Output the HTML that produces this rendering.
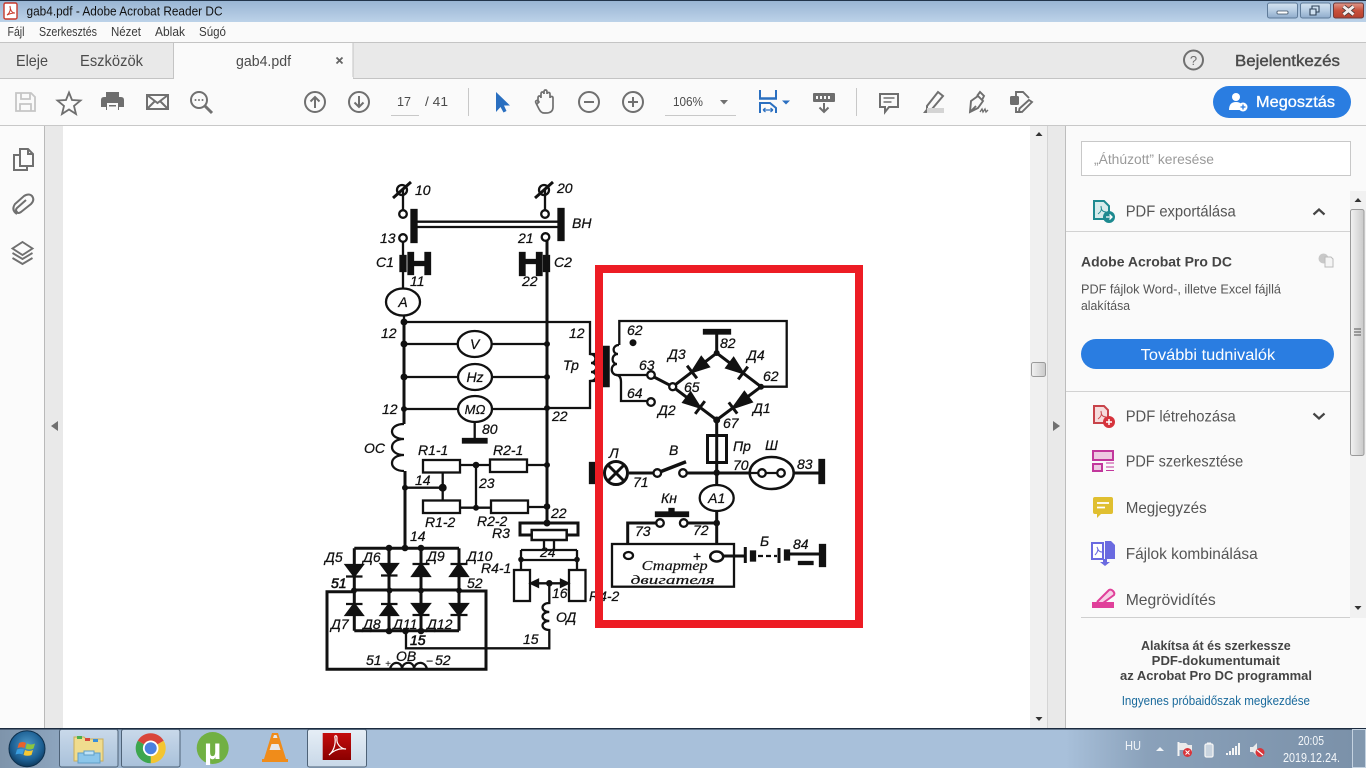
<!DOCTYPE html>
<html lang="hu"><head><meta charset="utf-8"><title>gab4.pdf - Adobe Acrobat Reader DC</title>
<style>
html,body{margin:0;padding:0;width:1366px;height:768px;overflow:hidden;background:#fff}
svg{display:block}
text{font-family:"Liberation Sans","DejaVu Sans",sans-serif}
.s{font-size:14px;font-style:italic;fill:#111;stroke:#111;stroke-width:.25}
.m{font-size:14px;font-style:italic;fill:#111;stroke:#111;stroke-width:.25;text-anchor:middle}
.ui{fill:#4b4b4b}
.w path,.w line,.w circle,.w ellipse,.w rect{fill:none;stroke:#111;stroke-width:2.3}
.w .t{stroke-width:3}
.w .d,.k{fill:#111!important;stroke:#111!important;stroke-width:1}
.o{fill:#fff!important;stroke:#111;stroke-width:2}
.ic{fill:none;stroke:#707070;stroke-width:2}
</style></head><body>
<svg width="1366" height="768" viewBox="0 0 1366 768" xmlns="http://www.w3.org/2000/svg">
<defs>
<linearGradient id="tb" x1="0" y1="0" x2="0" y2="1"><stop offset="0" stop-color="#98b4d2"/><stop offset="1" stop-color="#bcd2e8"/></linearGradient>
<linearGradient id="btn" x1="0" y1="0" x2="0" y2="1"><stop offset="0" stop-color="#d4e2f0"/><stop offset=".5" stop-color="#b6cce2"/><stop offset="1" stop-color="#8faccb"/></linearGradient>
<linearGradient id="cl" x1="0" y1="0" x2="0" y2="1"><stop offset="0" stop-color="#e09a8c"/><stop offset=".5" stop-color="#c9503c"/><stop offset="1" stop-color="#b5402e"/></linearGradient>
<linearGradient id="task" x1="0" y1="0" x2="1" y2="0"><stop offset="0" stop-color="#7e94ab"/><stop offset=".06" stop-color="#93abc5"/><stop offset=".12" stop-color="#a8c0da"/><stop offset=".78" stop-color="#a8c0da"/><stop offset=".84" stop-color="#8aa1ba"/><stop offset="1" stop-color="#7a90a8"/></linearGradient>
<linearGradient id="tbtn" x1="0" y1="0" x2="0" y2="1"><stop offset="0" stop-color="#c9d9ea"/><stop offset="1" stop-color="#a9c1da"/></linearGradient>
<linearGradient id="tbta" x1="0" y1="0" x2="0" y2="1"><stop offset="0" stop-color="#e6eef6"/><stop offset="1" stop-color="#c8d8e8"/></linearGradient>
<linearGradient id="sb" x1="0" y1="0" x2="1" y2="0"><stop offset="0" stop-color="#f2f2f2"/><stop offset="1" stop-color="#c9c9c9"/></linearGradient>
<radialGradient id="orb" cx=".5" cy=".4" r=".6"><stop offset="0" stop-color="#4f9ac9"/><stop offset=".7" stop-color="#1c5f93"/><stop offset="1" stop-color="#0e3a5e"/></radialGradient>
<linearGradient id="ared" x1="0" y1="0" x2="0" y2="1"><stop offset="0" stop-color="#c40d0d"/><stop offset="1" stop-color="#8a0000"/></linearGradient>
</defs>

<!-- title bar -->
<rect width="1366" height="22" fill="url(#tb)"/>
<rect width="1366" height="1" fill="#22344a"/>
<rect x="4" y="3" width="13" height="16" rx="1.5" fill="#fff" stroke="#c8392b" stroke-width="1.4"/>
<path d="M7 15c3-2 4-6 3-9c0 4 2 7 5 7c-3 0-6 1-8 2z" fill="none" stroke="#c8392b" stroke-width="1"/>
<text x="26.5" y="15.5" font-size="13" fill="#111" textLength="196" lengthAdjust="spacingAndGlyphs">gab4.pdf - Adobe Acrobat Reader DC</text>
<rect x="1267.5" y="3" width="30" height="15" rx="2" fill="url(#btn)" stroke="#5f7b99"/>
<rect x="1300.5" y="3" width="30" height="15" rx="2" fill="url(#btn)" stroke="#5f7b99"/>
<rect x="1333.5" y="3" width="30" height="15" rx="2" fill="url(#cl)" stroke="#6e3a3a"/>
<rect x="1277" y="11" width="11" height="3" rx="1" fill="#fff" stroke="#3a4d63" stroke-width=".8"/>
<path d="M1312 9v-3h7v6h-3M1310 9h6v6h-6z" fill="#cfe0f0" stroke="#2f4258" stroke-width="1.1"/>
<path d="M1343.5 6.5l10 8M1353.5 6.5l-10 8" stroke="#4a3b3b" stroke-width="4.6"/>
<path d="M1343.5 6.5l10 8M1353.5 6.5l-10 8" stroke="#f4eeee" stroke-width="2.8"/>

<!-- menu -->
<rect y="22" width="1366" height="20" fill="#fafafa"/>
<rect y="42" width="1366" height="1" fill="#c4c4c4"/>
<g font-size="13" fill="#3a3a3a">
<text x="7.5" y="36" textLength="17" lengthAdjust="spacingAndGlyphs">Fájl</text>
<text x="39" y="36" textLength="58" lengthAdjust="spacingAndGlyphs">Szerkesztés</text>
<text x="111" y="36" textLength="30" lengthAdjust="spacingAndGlyphs">Nézet</text>
<text x="155" y="36" textLength="30" lengthAdjust="spacingAndGlyphs">Ablak</text>
<text x="199" y="36" textLength="27" lengthAdjust="spacingAndGlyphs">Súgó</text>
</g>

<!-- tabs -->
<rect y="43" width="1366" height="35" fill="#e9e9e9"/>
<rect y="78" width="1366" height="1" fill="#c4c4c4"/>
<rect x="173.500" y="42.500" width="179.500" height="36" fill="#fafafa" stroke="#c4c4c4"/>
<rect x="174" y="77" width="179" height="3" fill="#fafafa"/>
<text x="16" y="66" font-size="16" class="ui" textLength="32" lengthAdjust="spacingAndGlyphs">Eleje</text>
<text x="80" y="66" font-size="16" class="ui" textLength="63" lengthAdjust="spacingAndGlyphs">Eszközök</text>
<text x="236" y="66" font-size="15" class="ui" textLength="55" lengthAdjust="spacingAndGlyphs">gab4.pdf</text>
<path d="M336.500 57.500l6 6M342.500 57.500l-6 6" stroke="#666" stroke-width="1.800"/>
<circle cx="1193.500" cy="60" r="9.500" fill="none" stroke="#707070" stroke-width="2"/>
<text x="1193.500" y="65" font-size="13" fill="#707070" text-anchor="middle">?</text>
<text x="1235" y="66" font-size="16" fill="#4a4a4a" stroke="#4a4a4a" stroke-width=".4" textLength="105" lengthAdjust="spacingAndGlyphs">Bejelentkezés</text>

<!-- toolbar -->
<rect y="79" width="1366" height="46" fill="#fafafa"/>
<rect y="125" width="1366" height="1.500" fill="#c8c8c8"/>
<g fill="none" stroke="#c6c6c6" stroke-width="1.800"><path d="M16 93h15l4 4v14H16zM21 93v6h9v-6M20 111v-7h11v7"/></g>
<path d="M69 92.500l3 7.500 8.500.500-6.500 5.500 2 8-7-4.500-7 4.500 2-8-6.500-5.500 8.500-.500z" fill="none" stroke="#6e6e6e" stroke-width="1.800"/>
<path d="M106 92h13v5h-13z" fill="#6e6e6e"/><path d="M101 100q0-3 3-3h17q3 0 3 3v7h-5v3h-13v-3h-5z" fill="#6e6e6e"/><rect x="107" y="103" width="11" height="7" fill="#fafafa"/><rect x="109" y="105" width="7" height="1.500" fill="#6e6e6e"/>
<g class="ic"><rect x="147" y="95" width="21" height="14"/><path d="M147 95l10.500 8 10.500-8M147 109l8-8M168 109l-8-8"/></g>
<g class="ic"><circle cx="199" cy="100" r="8"/><path d="M205 106l7 7" stroke-width="3"/></g>
<g fill="#707070"><circle cx="195.500" cy="100" r="1"/><circle cx="199" cy="100" r="1"/><circle cx="202.500" cy="100" r="1"/></g>
<g class="ic"><circle cx="315" cy="102" r="10"/><path d="M315 108v-11M310.500 101.500l4.500-4.500 4.500 4.500"/></g>
<g class="ic"><circle cx="359" cy="102" r="10"/><path d="M359 96v11M354.500 102.500l4.500 4.500 4.500-4.500"/></g>
<text x="397" y="106" font-size="12.500" class="ui" textLength="14" lengthAdjust="spacingAndGlyphs">17</text>
<text x="425" y="106" font-size="12.500" class="ui" textLength="23" lengthAdjust="spacingAndGlyphs">/ 41</text>
<rect x="391" y="115" width="28" height="1" fill="#c8c8c8"/>
<rect x="468" y="88" width="1" height="28" fill="#c8c8c8"/>
<path d="M496 92v20l4.500-5 3 5.500 3-1.500-2.500-5.500h6z" fill="#2a6fc0"/>
<path d="M538 103v-5q0-2 1.500-2t1.500 2v-4q0-2 1.500-2t1.500 2v-2q0-2 1.500-2t1.500 2v2q0-1.500 1.500-1.500t1.500 1.500v4q0-1.500 1.500-1.500t1.500 1.500v9q0 6-7 6h-2q-3 0-5-4l-3-6q-1-2 .5-2.500 1.500-.500 2.500 1.500z" fill="none" stroke="#707070" stroke-width="1.700"/>
<g class="ic"><circle cx="589" cy="102" r="10"/><path d="M584 102h10"/><circle cx="633" cy="102" r="10"/><path d="M628 102h10M633 97v10"/></g>
<text x="673" y="106" font-size="12.500" class="ui" textLength="30" lengthAdjust="spacingAndGlyphs">106%</text>
<path d="M720 100h8l-4 4.500z" fill="#707070"/>
<rect x="665" y="115" width="71" height="1" fill="#c8c8c8"/>
<g fill="none" stroke="#2a6fc0" stroke-width="2"><path d="M760 90v8M776 90v8"/><path d="M759 98.500h18" stroke-width="2.500"/><path d="M760 113v-10h10l6 5v5" /><path d="M763 110h10M763 110l2.500-2M763 110l2.500 2M773 110l-2.500-2M773 110l-2.500 2" stroke-width="1.200"/></g>
<path d="M782 100.500h8l-4 4z" fill="#2a6fc0"/>
<rect x="813" y="93" width="22" height="9" rx="1" fill="#6e6e6e"/><g fill="#fafafa"><rect x="816" y="96" width="2" height="3"/><rect x="820" y="96" width="2" height="3"/><rect x="824" y="96" width="2" height="3"/><rect x="828" y="96" width="2" height="3"/></g>
<path d="M824 103v9M819.500 107.500l4.500 4.500 4.500-4.500" fill="none" stroke="#6e6e6e" stroke-width="2"/>
<rect x="856" y="88" width="1" height="28" fill="#c8c8c8"/>
<path d="M880 94h18v13h-9l-4 5v-5h-5z" fill="none" stroke="#6e6e6e" stroke-width="2"/><path d="M883.500 98h11M883.500 102h8" stroke="#6e6e6e" stroke-width="1.500"/>
<path d="M927 106l11-14 5 4-11 13h-5z" fill="none" stroke="#707070" stroke-width="2"/><path d="M923 113l4-5 3 2-1 3z" fill="#707070"/><rect x="927" y="108" width="17" height="5" fill="#d4d4d4"/>
<path d="M970 112l1-11 7-5 5 5-5 7-8 4zM970 112l6-6M977 96l3-4 4 4-2 4" fill="none" stroke="#6e6e6e" stroke-width="1.900"/><path d="M980 112l2-3 1 3 2-3 1 3 2-2" fill="none" stroke="#6e6e6e" stroke-width="1.300"/>
<rect x="1010" y="96" width="9" height="9" rx="1.500" fill="#6e6e6e"/><path d="M1016 96v-4h7l6 6M1021 112h-5v-5M1029 100l3 2-10 10-3-.500.500-3z" fill="none" stroke="#6e6e6e" stroke-width="1.900"/>
<rect x="1213" y="86" width="138" height="32" rx="16" fill="#2a7de1"/>
<circle cx="1236" cy="97" r="4" fill="#fff"/><path d="M1229 110q0-8 7-8t7 8z" fill="#fff"/><circle cx="1243" cy="107" r="4.500" fill="#fff"/><path d="M1243 104.500v5M1240.500 107h5" stroke="#2a7de1" stroke-width="1.300"/>
<text x="1256" y="107" font-size="16" fill="#fff" stroke="#fff" stroke-width=".3" textLength="79" lengthAdjust="spacingAndGlyphs">Megosztás</text>

<!-- side panels -->
<rect y="126" width="44" height="602" fill="#fbfbfb"/>
<rect x="44" y="126" width="1" height="602" fill="#b9b9b9"/>
<rect x="45" y="126" width="18" height="602" fill="#e9e9e9"/>
<rect x="1030" y="126" width="17" height="602" fill="#f0f0f0"/>
<rect x="1047" y="126" width="1" height="602" fill="#d4d4d4"/>
<rect x="1048" y="126" width="17" height="602" fill="#e9e9e9"/>
<rect x="1065" y="126" width="1" height="602" fill="#bdbdbd"/>
<rect x="1066" y="126" width="300" height="602" fill="#fafafa"/>
<g fill="none" stroke="#707070" stroke-width="2"><path d="M20 155h-6v15h13v-4"/><path d="M20 149h8l5 5v12H20zM28 149v5h5"/></g>
<path d="M17 214q-6-4-2-10l9-8q5-3 8 0 3 4-1 8l-10 8q-3 2-4 0-2-2 0-4l9-8" fill="none" stroke="#707070" stroke-width="2"/>
<g fill="none" stroke="#707070" stroke-width="1.900"><path d="M22.500 242l10 6.500-10 6.500-10-6.500z"/><path d="M12.500 253l10 6 10-6M12.500 258l10 6 10-6"/></g>
<path d="M58 421v10l-7-5z" fill="#707070"/>
<path d="M1053 421v10l7-5z" fill="#707070"/>
<path d="M1035.500 136l3.500-4 3.500 4z" fill="#333"/>
<path d="M1035.500 717l3.500 4 3.500-4z" fill="#333"/>
<rect x="1031.500" y="362.500" width="14" height="14" rx="2" fill="url(#sb)" stroke="#9a9a9a"/>

<!-- right pane -->
<rect x="1081.500" y="141.500" width="269" height="34" fill="#fff" stroke="#c8c8c8"/>
<text x="1094" y="164" font-size="14" fill="#9a9a9a" textLength="120" lengthAdjust="spacingAndGlyphs">„Áthúzott” keresése</text>
<rect x="1066" y="231" width="284" height="1" fill="#d2d2d2"/>
<rect x="1066" y="391" width="284" height="1" fill="#d2d2d2"/>
<path d="M1094 201h10l5 5v13h-15z" fill="#d7ecec" stroke="#1d8a90" stroke-width="2"/><circle cx="1109" cy="217" r="6" fill="#1d8a90"/><path d="M1106 217h6M1109.500 214.500l2.500 2.500-2.500 2.500" stroke="#fff" fill="none" stroke-width="1.300"/>
<path d="M1098 214c3-2 4-5 3-8c0 3 1 6 5 6" fill="none" stroke="#1d8a90" stroke-width=".9"/>
<g font-size="16" fill="#555">
<text x="1125.700" y="216.700" textLength="110" lengthAdjust="spacingAndGlyphs">PDF exportálása</text>
<text x="1125.700" y="421.700" textLength="110" lengthAdjust="spacingAndGlyphs">PDF létrehozása</text>
<text x="1125.700" y="466.700" textLength="117.500" lengthAdjust="spacingAndGlyphs">PDF szerkesztése</text>
<text x="1125.700" y="513" textLength="81" lengthAdjust="spacingAndGlyphs">Megjegyzés</text>
<text x="1125.700" y="559" textLength="132" lengthAdjust="spacingAndGlyphs">Fájlok kombinálása</text>
<text x="1125.700" y="605" textLength="90" lengthAdjust="spacingAndGlyphs">Megrövidítés</text>
</g>
<path d="M1313.500 214.500l5.500-5 5.500 5" fill="none" stroke="#444" stroke-width="2.200"/>
<path d="M1313.500 413.500l5.500 5 5.500-5" fill="none" stroke="#444" stroke-width="2.200"/>
<text x="1081" y="266.700" font-size="13.500" font-weight="bold" fill="#444" textLength="151" lengthAdjust="spacingAndGlyphs">Adobe Acrobat Pro DC</text>
<circle cx="1323.500" cy="258.500" r="5" fill="#c8c8c8"/><path d="M1325 257h6l2 2v8h-8z" fill="#f4f4f4" stroke="#bbb"/>
<text x="1081" y="293.300" font-size="12.500" fill="#555" textLength="200" lengthAdjust="spacingAndGlyphs">PDF fájlok Word-, illetve Excel fájllá</text>
<text x="1081" y="310" font-size="12.500" fill="#555" textLength="49" lengthAdjust="spacingAndGlyphs">alakítása</text>
<rect x="1081" y="339" width="253" height="30" rx="15" fill="#2a7de1"/>
<text x="1140.700" y="360" font-size="16" fill="#fff" textLength="134.500" lengthAdjust="spacingAndGlyphs">További tudnivalók</text>
<path d="M1094 406h10l4 4v13h-14z" fill="#f6dcdc" stroke="#c8434a" stroke-width="2"/><circle cx="1109" cy="422" r="6" fill="#d6333c"/><path d="M1106 422h6M1109 419v6" stroke="#fff" stroke-width="1.500"/>
<path d="M1098 419c3-2 4-5 3-8c0 3 1 6 5 6" fill="none" stroke="#c8434a" stroke-width=".9"/>
<rect x="1093" y="451" width="20" height="9" fill="#eec9e2" stroke="#c2379c" stroke-width="2"/><rect x="1093" y="464" width="9" height="7" fill="#eec9e2" stroke="#c2379c" stroke-width="2"/><path d="M1106 463h8M1106 467h8M1106 470.500h8" stroke="#c2379c"/>
<path d="M1095 497h16q2 0 2 2v13q0 2-2 2h-10l-4 4v-4h-2q-2 0-2-2v-13q0-2 2-2z" fill="#e0bf30"/><path d="M1097 503h12M1097 507.500h8" stroke="#fff" stroke-width="1.800"/>
<path d="M1092 543h11v16h-11z" fill="#fff" stroke="#6a6ae0" stroke-width="2"/><path d="M1105 541h6l4 4v14h-10z" fill="#6a6ae0"/><path d="M1103 559v3h-3l5 4 5-4h-3v-3z" fill="#6a6ae0"/><path d="M1095 555c2-2 4-5 2-8c1 3 2 5 5 5" fill="none" stroke="#6a6ae0"/>
<path d="M1097 602l12-12q2-1 4 1t1 4l-11 8" fill="#f6d0e6" stroke="#e0409a" stroke-width="2"/><rect x="1092" y="602" width="22" height="6" fill="#e0409a"/>
<rect x="1081" y="617" width="269" height="1" fill="#cfcfcf"/>
<rect x="1350" y="191" width="16" height="427" fill="#f1f1f1"/>
<path d="M1354.500 202l3.500-4 3.500 4z" fill="#333"/>
<path d="M1354.500 606l3.500 4 3.500-4z" fill="#333"/>
<rect x="1350.500" y="209.500" width="13.500" height="246" rx="2" fill="url(#sb)" stroke="#9a9a9a"/>
<path d="M1354 329h7M1354 332h7M1354 335h7" stroke="#555"/>
<g font-size="12.500" font-weight="bold" fill="#444">
<text x="1141" y="650" textLength="149.700" lengthAdjust="spacingAndGlyphs">Alakítsa át és szerkessze</text>
<text x="1151.700" y="665" textLength="128.300" lengthAdjust="spacingAndGlyphs">PDF-dokumentumait</text>
<text x="1120" y="680" textLength="192" lengthAdjust="spacingAndGlyphs">az Acrobat Pro DC programmal</text>
</g>
<text x="1121.700" y="705" font-size="12.500" fill="#1a6a9c" textLength="188.300" lengthAdjust="spacingAndGlyphs">Ingyenes próbaidőszak megkezdése</text>

<!-- PDF page -->
<rect x="63" y="126" width="967" height="602" fill="#fff"/>

<g class="w">
<!-- top terminals -->
<path d="M403 190V211M545 190V211M414 221.700H560M414 227H560"/>
<circle class="o" cx="403" cy="214" r="3.800"/><circle class="o" cx="545" cy="214" r="3.800"/>
<circle cx="402" cy="190" r="5"/><path style="stroke-width:3" d="M393 198L411 182"/><circle cx="544" cy="190" r="5"/><path style="stroke-width:3" d="M535 198L553 182"/>
<rect class="k" x="411.500" y="210" width="5" height="32"/><rect class="k" x="558.500" y="209" width="5" height="31"/>
<!-- left / right rails -->
<path class="t" d="M404 322V424M405 471V548M547 240V523"/>
<path d="M403 241V290"/>
<circle class="o" cx="403" cy="238" r="3.800"/><circle class="o" cx="545.500" cy="237" r="3.800"/>
<rect class="k" x="400.500" y="256" width="5" height="15"/><rect class="k" x="544" y="256" width="5" height="15"/>
<rect class="k" x="408.500" y="253" width="4.500" height="21"/><rect class="k" x="425.500" y="253" width="4.500" height="21"/><rect class="k" x="412" y="262" width="14" height="3"/>
<rect class="k" x="520" y="253" width="4.500" height="22"/><rect class="k" x="537" y="253" width="4.500" height="22"/><rect class="k" x="524" y="260" width="14" height="3"/>
<!-- meters -->
<path d="M404 315V322"/>
<ellipse class="o" cx="403" cy="302" rx="17" ry="13.500"/>
<path d="M404 322H590V354H596M404 344H547M404 377H547M404 409H547M547 408H590V381H596"/>
<path d="M590 354c7 0 7 9 1 9c7 0 7 9 0 9c7 0 7 9-1 9"/>
<ellipse class="o" cx="474.700" cy="344" rx="17" ry="13"/><ellipse class="o" cx="475" cy="377" rx="17" ry="13"/><ellipse class="o" cx="475" cy="409" rx="17" ry="13"/>
<path d="M474.700 422V440"/><rect class="k" x="463" y="439" width="23.500" height="3.500"/>
<circle class="d" cx="404" cy="322" r="3"/><circle class="d" cx="404" cy="344" r="3"/><circle class="d" cx="404" cy="377" r="3"/><circle class="d" cx="404" cy="409" r="2.500"/>
<circle class="d" cx="547" cy="344" r="2.500"/><circle class="d" cx="547" cy="377" r="2.500"/><circle class="d" cx="547" cy="408" r="2.500"/>
<rect class="k" x="603.500" y="347" width="5" height="39"/>
<!-- OC coil -->
<path d="M404 424c-16 0-16 15 0 15c-16 0-16 16 0 16c-16 0-16 16 0 16"/>
<!-- R block -->
<path d="M405 487.700H442.700M442.700 472V500M460 465H490M527 465H547M476 465V507.700M460 507.700H490M528 507H547"/>
<rect class="o" x="423" y="460" width="37" height="12.500"/><rect class="o" x="490" y="459.500" width="37" height="12.500"/>
<rect class="o" x="423" y="500.500" width="37" height="12.500"/><rect class="o" x="491" y="500.500" width="37" height="12.500"/>
<circle class="d" cx="405" cy="487.700" r="2.500"/><circle class="d" cx="442.700" cy="487.700" r="3.500"/><circle class="d" cx="476" cy="465" r="2.800"/><circle class="d" cx="476" cy="507.700" r="2.500"/><circle class="d" cx="547" cy="465" r="2.500"/><circle class="d" cx="547" cy="506.500" r="2.800"/><circle class="d" cx="547" cy="523" r="3"/>
<!-- R3 -->
<path class="t" d="M531.700 535H520V523H578V535H566.700"/>
<rect class="o" x="531.700" y="530" width="35" height="10" style="stroke-width:2.500"/>
<path d="M544 540V550M554 540V550M521 550H577M521 550V570M577 550V570M521 560H577"/>
<rect class="o" x="514" y="570" width="16" height="31"/><rect class="o" x="569" y="570" width="16.500" height="31"/>
<circle class="d" cx="521" cy="559.500" r="2.300"/><circle class="d" cx="577" cy="559.500" r="2.300"/>
<path d="M530 583.300H569"/><path class="k" d="M531 583.300l7-3.300v6.600zM568 583.300l-7-3.300v6.600z"/><circle class="d" cx="549.300" cy="583.300" r="2.800"/>
<path d="M549.300 583V603c-9 0-9 9 0 9c-9 0-9 9 0 9c-9 0-9 9 0 9V648.300H406V630"/>
<!-- diode bridge -->
<path class="t" d="M354.300 548.300H459M354.300 630.700H459M354.300 548.300V630.700M389 548.300V630.700M421 548.300V630.700M459 548.300V630.700M352 590H459"/>
<path class="t" d="M354 591.700H327V669.300H486V591H459"/>
<path d="M390 669c2-8 11-8 12-1c2-7 11-7 12 0c2-7 11-7 13 1"/>
<path class="k" d="M346 565h16.500l-8.300 11zM381 564h16.500l-8.300 11zM412.500 576h17l-8.500-12zM450.500 576h17l-8.500-12zM346 615h16.500l-8.300-11zM381 615h16.500l-8.300-11zM412.500 604h17l-8.500 11zM450.500 604h17l-8.500 11z"/>
<path d="M346 576.500H362.500M381 575.500H397.500M412.500 564H429.500M450.500 564H467.500M346 604H362.500M381 604H397.500M412.500 615H429.500M450.500 615H467.500"/>
<circle class="d" cx="354" cy="590.500" r="2.500"/><circle class="d" cx="389.500" cy="590.500" r="2.500"/><circle class="d" cx="421" cy="590.500" r="2.500"/><circle class="d" cx="459" cy="590.500" r="2.500"/>
<circle class="d" cx="389" cy="548" r="2.800"/><circle class="d" cx="405" cy="548" r="2.800"/><circle class="d" cx="421" cy="548" r="2.800"/>
<circle class="d" cx="389" cy="631" r="2.800"/><circle class="d" cx="405.500" cy="631" r="2.800"/><circle class="d" cx="421" cy="631" r="2.800"/>
<!-- Л bar left of the red frame -->
<rect class="k" x="590" y="463" width="4" height="20"/>
</g>

<g>
<text class="s" x="415" y="195">10</text><text class="s" x="557" y="193">20</text>
<text class="s" x="572" y="228">ВН</text><text class="s" x="380" y="243">13</text><text class="s" x="518" y="243">21</text>
<text class="s" x="376" y="267">C1</text><text class="s" x="554" y="267">C2</text><text class="s" x="410" y="286">11</text><text class="s" x="522" y="286">22</text>
<text class="m" x="403" y="307">A</text><text class="m" x="474.700" y="349">V</text><text class="m" x="475" y="382" font-size="13">Hz</text><text class="m" x="475" y="414" style="font-size:13px">MΩ</text>
<text class="s" x="381" y="338">12</text><text class="s" x="569" y="338">12</text><text class="s" x="563" y="370">Тр</text><text class="s" x="382" y="414">12</text><text class="s" x="552" y="421">22</text><text class="s" x="482" y="434">80</text>
<text class="s" x="364" y="453">ОС</text><text class="s" x="418" y="455">R1-1</text><text class="s" x="493" y="455">R2-1</text><text class="s" x="415" y="485">14</text><text class="s" x="479" y="488">23</text>
<text class="s" x="425" y="527">R1-2</text><text class="s" x="477" y="526">R2-2</text><text class="s" x="551" y="518">22</text><text class="s" x="492" y="538">R3</text><text class="s" x="410" y="541">14</text><text class="s" x="540" y="557">24</text>
<text class="s" x="481" y="573">R4-1</text><text class="s" x="589" y="601">R4-2</text><text class="s" x="552" y="598">16</text><text class="s" x="556" y="622">ОД</text><text class="s" x="523" y="644">15</text>
<text class="s" x="325" y="562">Д5</text><text class="s" x="363" y="562">Д6</text><text class="s" x="427" y="561">Д9</text><text class="s" x="467" y="561">Д10</text>
<text class="s" x="331" y="588" style="stroke-width:.6">51</text><text class="s" x="467" y="588">52</text>
<text class="s" x="331" y="629">Д7</text><text class="s" x="363" y="629">Д8</text><text class="s" x="393" y="629">Д11</text><text class="s" x="427" y="629">Д12</text>
<text class="s" x="410" y="645" style="stroke-width:.6">15</text><text class="s" x="366" y="665">51</text><text class="s" x="385" y="667" style="font-size:10px;stroke-width:0">+</text><text class="s" x="396" y="661">ОВ</text><text class="s" x="426" y="665" style="font-size:12px">−</text><text class="s" x="435" y="665">52</text>
</g>

<!-- right circuit -->
<g class="w">
<path d="M619.300 345V321H786.700V386.700H761"/>
<circle class="d" cx="633" cy="342.700" r="3"/>
<path d="M619 345c-7 0-7 9-1 9c-7 0-7 10-1 10c-7 0-7 11 0 11H647"/>
<path d="M616 375c4 0 5 3 5 7V401H647"/>
<circle class="o" cx="651" cy="375" r="3.800"/><circle class="o" cx="651" cy="402" r="3.800"/>
<rect class="k" x="604" y="347" width="4.500" height="39"/>
<path class="t" d="M654 377L672.700 386.700M672.700 386.700L716.700 353L761 386.700L716.700 420ZM716.700 353V332"/>
<rect class="k" x="704" y="330" width="26" height="3.500"/>
<circle class="o" cx="672.700" cy="386.700" r="3.500"/>
<path class="k" d="M708.700 366.700L701.300 357.300L692 372ZM733.600 358.200L726.400 367.800L743 373ZM751.600 401.800L744.400 392.200L733 408ZM690.600 392.700L683.400 402.300L700 407.500Z"/>
<path class="t" d="M696.900 378.300L687.100 365.700M747.800 366.600L738.200 379.400M737.200 413.600L728.800 402.400M704.800 401.100L695.200 413.900"/>
<circle class="d" cx="716.700" cy="353" r="2.500"/><circle class="d" cx="761" cy="386.700" r="2.500"/><circle class="d" cx="716.700" cy="420" r="3"/>
<path class="t" d="M716.700 420V546M629 473H654M686 473H750M792 473H821"/>
<rect class="o" x="707.500" y="435.500" width="19" height="27" style="stroke-width:3"/>
<path class="t" d="M716.700 435V463"/>
<circle class="o" cx="616" cy="473" r="11.500" style="stroke-width:3"/><path class="t" d="M608 465L624 481M624 465L608 481"/>
<circle class="o" cx="657.300" cy="473" r="3.800"/><circle class="o" cx="683" cy="473" r="3.800"/>
<path d="M661 471.500L686 461.700" style="stroke-width:3.500"/>
<ellipse class="o" cx="771.700" cy="473" rx="22" ry="16" style="stroke-width:2.500"/>
<path d="M750 473H758M766 473H777"/>
<circle class="o" cx="762" cy="473" r="3.800"/><circle class="o" cx="781" cy="473" r="3.800"/>
<rect class="k" x="819.500" y="460" width="4.500" height="23"/>
<circle class="d" cx="716.700" cy="472.700" r="2.800"/>
<ellipse class="o" cx="716.700" cy="498" rx="17" ry="13"/>
<rect class="k" x="656" y="512.500" width="32" height="3.500"/><rect class="k" x="669.500" y="509" width="4" height="4"/>
<path class="t" d="M688 523H716.700M656 523H627.700V552"/>
<circle class="o" cx="660" cy="523" r="3.800"/><circle class="o" cx="683.700" cy="523" r="3.800"/>
<circle class="d" cx="716.700" cy="523" r="2.800"/>
<rect class="o" x="612" y="544" width="122" height="42.700"/>
<ellipse class="o" cx="628.500" cy="555.500" rx="4.500" ry="3.500"/>
<path class="t" d="M722 556H746M787 554H823"/>
<ellipse class="o" cx="716.700" cy="556.500" rx="6.500" ry="5" style="stroke-width:2.500"/>
<path class="t" d="M745.300 547V563M779 548V563"/>
<path d="M758 556H777" stroke-dasharray="5 3"/>
<rect class="k" x="751" y="551.500" width="4" height="9"/><rect class="k" x="785" y="550.500" width="4" height="9"/>
<rect class="k" x="820" y="545" width="5" height="21"/>
<rect class="k" x="799" y="562" width="13.500" height="2"/>
</g>
<g>
<text class="s" x="627" y="335">62</text><text class="s" x="639" y="370">63</text><text class="s" x="627" y="398">64</text>
<text class="s" x="720" y="348">82</text><text class="s" x="668" y="359">Д3</text><text class="s" x="747" y="360">Д4</text><text class="s" x="763" y="381">62</text><text class="s" x="684" y="392">65</text><text class="s" x="658" y="415">Д2</text><text class="s" x="753" y="413">Д1</text><text class="s" x="723" y="428">67</text>
<text class="s" x="733" y="451">Пр</text><text class="s" x="765" y="450">Ш</text><text class="s" x="609" y="458">Л</text><text class="s" x="669" y="455">В</text><text class="s" x="733" y="470">70</text><text class="s" x="797" y="469">83</text><text class="s" x="633" y="487">71</text>
<text class="s" x="661" y="503">Кн</text><text class="m" x="716.700" y="503">A1</text><text class="s" x="635" y="536">73</text><text class="s" x="693" y="535">72</text>
<text class="s" x="693" y="561" style="font-style:normal">+</text><text class="s" x="760" y="546">Б</text><text class="s" x="793" y="549">84</text>
<text x="641.700" y="570" font-size="14" font-style="italic" fill="#111" stroke="#111" stroke-width=".2" textLength="66" lengthAdjust="spacingAndGlyphs" style="font-family:'Liberation Serif',serif">Стартер</text>
<text x="630.700" y="584" font-size="13" font-style="italic" fill="#111" stroke="#111" stroke-width=".2" textLength="84" lengthAdjust="spacingAndGlyphs" style="font-family:'Liberation Serif',serif">двигателя</text>
</g>
<rect x="599" y="269" width="260" height="355" fill="none" stroke="#ed1c24" stroke-width="8"/>

<!-- taskbar -->
<rect y="728" width="1366" height="40" fill="url(#task)"/>
<rect y="728" width="1366" height="1.500" fill="#1c2b3f"/>
<circle cx="27" cy="748.700" r="18" fill="url(#orb)" stroke="#0d2f4c"/>
<path d="M19 743q4-2 7 0l-1.500 5q-3-1.500-7 0z" fill="#e8622c"/><path d="M27 743.500q4 2 8 0l-1.500 5q-4 2-8 0z" fill="#8cc63f"/><path d="M17 749.500q4-1.500 7 0l-1.500 5q-3-1.500-7 0z" fill="#3a9ee0"/><path d="M25 750q4 2 8 0l-1.500 5q-4 1.500-8 0z" fill="#f6c832"/>
<rect x="59.500" y="729.500" width="58.500" height="37.500" rx="2" fill="url(#tbtn)" stroke="#4e6277"/>
<rect x="121.500" y="729.500" width="58.500" height="37.500" rx="2" fill="url(#tbtn)" stroke="#4e6277"/>
<rect x="307.500" y="729.500" width="59" height="37.500" rx="2" fill="url(#tbta)" stroke="#4e6277"/>
<path d="M74 737h10l2 2h17v22H74z" fill="#f0dc8e" stroke="#c9ad5a"/><rect x="77" y="736" width="5" height="3" fill="#4bb04f"/><rect x="85" y="738" width="5" height="3" fill="#d64a3a"/><rect x="93" y="739" width="5" height="3" fill="#3a8fd8"/>
<path d="M78 753h22v10H78z" fill="#8cc6ea" stroke="#5f9ec6"/><path d="M84 751h10v4H84z" fill="#bfe2f6" stroke="#5f9ec6"/>
<path d="M150.700 748.300L137.700 740.800A15 15 0 0 1 163.700 740.800Z" fill="#d9453a"/>
<path d="M150.700 748.300L163.700 740.800A15 15 0 0 1 150.700 763.300Z" fill="#f3c531"/>
<path d="M150.700 748.300L150.700 763.300A15 15 0 0 1 137.700 740.800Z" fill="#3da64e"/>
<circle cx="150.700" cy="748.300" r="7.800" fill="#fff"/><circle cx="150.700" cy="748.300" r="6" fill="#4a80e0"/>
<circle cx="212.700" cy="748" r="16" fill="#71b043"/>
<text x="212.700" y="759" font-size="30" font-weight="bold" fill="#fff" text-anchor="middle">µ</text>
<path d="M275 733l3 0 8 26h2v3h-26v-3h2l8-26z" fill="#f08c1a"/><path d="M271.500 744h7l2 6h-11z" fill="#e8e8e8"/><path d="M274 735h2.500l1 3h-4.500z" fill="#e8e8e8"/>
<rect x="322.700" y="733" width="28.300" height="27" fill="url(#ared)"/>
<path d="M329 755c4-3 7-10 6-17c-1-3 2-3 2 0c-1 6 4 11 9 11c-6-1-12 1-17 6z" fill="none" stroke="#fff" stroke-width="1.200"/>
<text x="1125" y="750" font-size="13" fill="#f0f4f8" textLength="16" lengthAdjust="spacingAndGlyphs">HU</text>
<path d="M1156 751l4-4 4 4z" fill="#f0f4f8"/>
<path d="M1178.500 742v14" stroke="#f4f4f4" stroke-width="2"/><path d="M1179 743h7l2 2h4v7h-6l-2-2h-5z" fill="#eaeaea"/><circle cx="1187.500" cy="752.500" r="4.500" fill="#d9353a"/><path d="M1185.500 750.500l4 4M1189.500 750.500l-4 4" stroke="#fff"/>
<rect x="1205" y="744" width="8" height="13" rx="1.500" fill="#c9d4df" stroke="#f4f4f4" stroke-width="1.300"/><rect x="1207" y="742.500" width="4" height="1.500" fill="#f4f4f4"/>
<g fill="#f4f4f4"><rect x="1226" y="753" width="2" height="2"/><rect x="1229" y="751" width="2" height="4"/><rect x="1232" y="748" width="2" height="7"/><rect x="1235" y="746" width="2" height="9"/><rect x="1238" y="743" width="2" height="12"/></g>
<path d="M1250 747h3l4-4v13l-4-4h-3z" fill="#eaeaea"/><circle cx="1260" cy="752.500" r="4.500" fill="#d9353a"/><path d="M1257 750l6 5" stroke="#fff" stroke-width="1.200"/>
<text x="1298" y="745" font-size="13" fill="#f4f7fa" textLength="26" lengthAdjust="spacingAndGlyphs">20:05</text>
<text x="1283" y="762" font-size="13" fill="#f4f7fa" textLength="57" lengthAdjust="spacingAndGlyphs">2019.12.24.</text>
<rect x="1352.500" y="729.500" width="13" height="38" fill="#8197ae" stroke="#c4d2e0"/>
</svg>
</body></html>
